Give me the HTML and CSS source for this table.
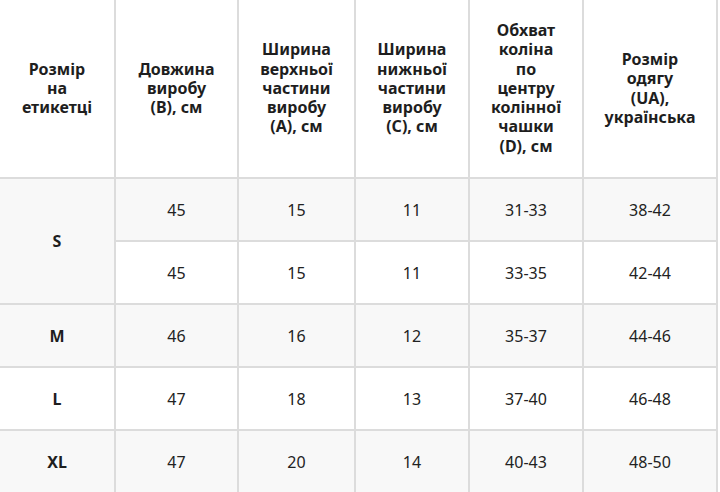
FILE: index.html
```html
<!DOCTYPE html>
<html lang="uk">
<head>
<meta charset="utf-8">
<link rel="stylesheet" href="styles.css">
</head>
<body>
<table class="size-table">
  <colgroup>
    <col class="c1"><col class="c2"><col class="c3"><col class="c4"><col class="c5"><col class="c6">
  </colgroup>
  <thead>
    <tr class="head-row">
      <th>Розмір на етикетці</th>
      <th>Довжина виробу (B), см</th>
      <th>Ширина верхньої частини виробу (A), см</th>
      <th>Ширина нижньої частини виробу (C), см</th>
      <th>Обхват коліна по центру колінної чашки (D), см</th>
      <th>Розмір одягу<br>(UA), українська</th>
    </tr>
  </thead>
  <tbody>
    <tr class="shade">
      <td class="size" rowspan="2">S</td>
      <td>45</td><td>15</td><td>11</td><td>31-33</td><td>38-42</td>
    </tr>
    <tr>
      <td>45</td><td>15</td><td>11</td><td>33-35</td><td>42-44</td>
    </tr>
    <tr class="shade">
      <td class="size">M</td>
      <td>46</td><td>16</td><td>12</td><td>35-37</td><td>44-46</td>
    </tr>
    <tr>
      <td class="size">L</td>
      <td>47</td><td>18</td><td>13</td><td>37-40</td><td>46-48</td>
    </tr>
    <tr class="shade">
      <td class="size">XL</td>
      <td>47</td><td>20</td><td>14</td><td>40-43</td><td>48-50</td>
    </tr>
  </tbody>
</table>
</body>
</html>
```
FILE: styles.css
```css
html, body {
  margin: 0;
  padding: 0;
  background: #ffffff;
  overflow: hidden;
}
body {
  font-family: "Noto Sans", "Open Sans", sans-serif;
  color: #222222;
}
.size-table {
  border-collapse: collapse;
  table-layout: fixed;
  width: 720px;
  margin: -2px 0 0 -2px;
}
.c1 { width: 116px; }
.c2 { width: 123px; }
.c3 { width: 117px; }
.c4 { width: 114px; }
.c5 { width: 114px; }
.c6 { width: 134px; }
.size-table th,
.size-table td {
  border: 2px solid #dcdcdc;
  text-align: center;
  vertical-align: middle;
  padding: 0 20px;
}
.size-table th {
  font-weight: 700;
  font-size: 16px;
  line-height: 19.3px;
  color: #1e1e1e;
}
.head-row { height: 179px; }
.size-table tbody tr { height: 63px; }
.size-table td {
  font-size: 16px;
  line-height: 20px;
}
.size-table td.size {
  font-weight: 700;
  color: #1e1e1e;
}
.shade td { background: #f8f8f8; }
```
